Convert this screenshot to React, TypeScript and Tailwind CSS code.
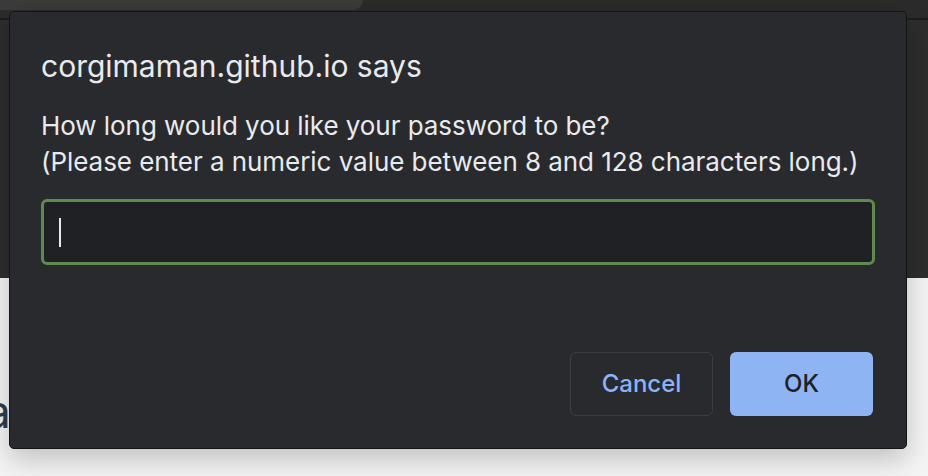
export default function App() {
  return (
    <div className="relative w-[928px] h-[476px] overflow-hidden bg-[#f4f4f4] font-['Inter',sans-serif]">
      {/* browser chrome behind the dialog */}
      <div className="flex flex-col h-[278px] bg-[#2d2d2d]">
        <div className="h-[18px] bg-[#2b2b2b]">
          <div className="w-[363px] h-[10px] bg-[#3b3b3b] rounded-br-[14px]" />
        </div>
        <div className="h-[2px] bg-[#1d1d1d]" />
      </div>
      <div className="pt-[110px] text-[46px] leading-none text-[#2c3e50] -ml-[15px]">a</div>

      {/* prompt dialog */}
      <div className="absolute left-[9px] top-[11px] w-[898px] h-[438px] bg-[#292a2d] border border-[#141414] rounded-[5px] shadow-[0_10px_28px_rgba(0,0,0,0.22)] flex flex-col px-[31px]">
        <h2 className="mt-[36px] text-[30px] leading-[36px] text-[#e8eaed]">
          corgimaman.github.io says
        </h2>
        <p className="mt-[24px] text-[26px] leading-[36px] text-[#e8eaed] tracking-[-0.05px]">
          How long would you like your password to be?
          <br />
          (Please enter a numeric value between 8 and 128 characters long.)
        </p>
        <div className="mt-[19px] h-[66px] w-[834px] rounded-[6px] border-[3px] border-[#5f8b50] bg-[#202124] flex items-center pl-[15px]">
          <div className="w-[2px] h-[29px] bg-[#e8eaed]" />
        </div>
        <div className="mt-auto mb-[32px] flex justify-end gap-[17px] pr-[2px]">
          <button className="w-[143px] h-[64px] rounded-[6px] border border-[#3c3d41] text-[#8ab4f8] text-[24px] font-medium">
            Cancel
          </button>
          <button className="w-[143px] h-[64px] rounded-[6px] bg-[#8fb4f4] text-[#202124] text-[24px] font-medium">
            OK
          </button>
        </div>
      </div>
    </div>
  );
}
